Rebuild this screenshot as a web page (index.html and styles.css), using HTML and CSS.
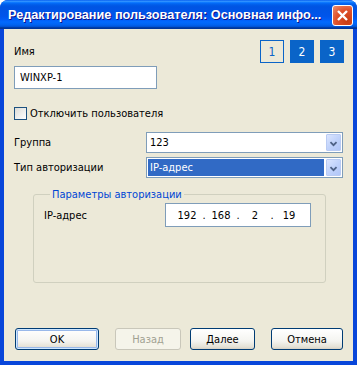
FILE: index.html
```html
<!DOCTYPE html>
<html lang="ru">
<head>
    <meta charset="UTF-8">
    <title>Редактирование пользователя</title>
    <link rel="stylesheet" href="styles.css">
</head>
<body>
    <div class="window">
        <div class="titlebar">
            <span class="title">Редактирование пользователя: Основная инфо...</span>
            <button class="close-btn" title="Закрыть">
                <svg width="19" height="19" viewBox="0 0 19 19">
                    <path d="M5 5 L14 14 M14 5 L5 14" stroke="#fff" stroke-width="2.4" fill="none"/>
                </svg>
            </button>
        </div>

        <div class="dialog-body">
            <div class="content">
                <div class="top-row">
                    <span class="field-label name-label">Имя</span>
                    <div class="pager">
                        <span class="page current">1</span>
                        <span class="page">2</span>
                        <span class="page">3</span>
                    </div>
                </div>

                <div class="textbox name-box">WINXP-1</div>

                <div class="check-row">
                    <span class="checkbox"></span>
                    <span>Отключить пользователя</span>
                </div>

                <div class="form-grid">
                    <span class="field-label">Группа</span>
                    <div class="combo">
                        <span class="combo-text">123</span>
                        <span class="combo-btn">
                            <svg width="15" height="17" viewBox="0 0 15 17"><path d="M4 7 L7.5 10.5 L11 7" stroke="#4d6185" stroke-width="2" fill="none"/></svg>
                        </span>
                    </div>

                    <span class="field-label">Тип авторизации</span>
                    <div class="combo">
                        <span class="combo-text selected">IP-адрес</span>
                        <span class="combo-btn">
                            <svg width="15" height="17" viewBox="0 0 15 17"><path d="M4 7 L7.5 10.5 L11 7" stroke="#4d6185" stroke-width="2" fill="none"/></svg>
                        </span>
                    </div>
                </div>

                <fieldset class="group-box">
                    <legend>Параметры авторизации</legend>
                    <div class="ip-row">
                        <span class="field-label">IP-адрес</span>
                        <div class="ip-box">
                            <span class="octet">192</span><span class="dot">.</span>
                            <span class="octet">168</span><span class="dot">.</span>
                            <span class="octet">2</span><span class="dot">.</span>
                            <span class="octet">19</span>
                        </div>
                    </div>
                </fieldset>
            </div>

            <div class="button-row">
                <button class="xp-btn ok-btn focused">OK</button>
                <button class="xp-btn back-btn" disabled>Назад</button>
                <button class="xp-btn next-btn">Далее</button>
                <button class="xp-btn cancel-btn">Отмена</button>
            </div>
        </div>
    </div>
</body>
</html>
```

FILE: styles.css
```css
/* XP style dialog */
body {
    margin: 0;
    padding: 0;
    font-family: 'DejaVu Sans Condensed', 'Liberation Sans', Tahoma, sans-serif;
    font-size: 11px;
    color: #000;
    background: #fff;
}

.window {
    width: 357px;
    height: 365px;
    box-sizing: border-box;
    padding: 0 4px 4px 4px;
    background: #0846da;
    border-radius: 8px 8px 0 0;
    display: flex;
    flex-direction: column;
}

/* Title bar */
.titlebar {
    height: 29px;
    margin: 0 -4px;
    padding: 0 4px 0 8px;
    display: flex;
    align-items: center;
    justify-content: space-between;
    border-radius: 8px 8px 0 0;
    background: linear-gradient(to bottom, #0058ee 0%, #3593ff 4%, #288eff 6%, #127dff 8%, #036ffc 10%, #0262ee 14%, #0057e5 20%, #0054e3 24%, #0055eb 56%, #005bf5 66%, #026afe 76%, #0062ef 86%, #0052d6 92%, #0040ab 94%, #003092 100%);
}

.title {
    font-family: 'Liberation Sans', Arial, sans-serif;
    font-weight: bold;
    font-size: 12.7px;
    color: #fff;
    text-shadow: 1px 1px #0f1089;
    white-space: nowrap;
    margin-top: 1px;
}

.close-btn {
    width: 21px;
    height: 21px;
    padding: 0;
    margin-top: 1px;
    border: 1px solid #fff;
    border-radius: 3px;
    background: radial-gradient(circle at 75% 80%, #c83c12 0%, #e0522c 55%, #ec8a6a 95%, #f4b69e 100%);
    display: flex;
    align-items: center;
    justify-content: center;
}

/* Dialog body */
.dialog-body {
    flex: 1;
    background: #ece9d8;
    display: flex;
    flex-direction: column;
}

.content {
    padding: 11px 9px 0 10px;
}

.top-row {
    display: flex;
    justify-content: space-between;
    align-items: flex-start;
    height: 23px;
}

.name-label {
    margin-top: 5px;
}

.pager {
    display: flex;
    gap: 6px;
}

.page {
    width: 24px;
    height: 23px;
    box-sizing: border-box;
    display: flex;
    align-items: center;
    justify-content: center;
    background: #0a64c8;
    color: #fff;
    font-size: 12px;
}

.page.current {
    background: transparent;
    border: 1px solid #0a64c8;
    color: #0a64c8;
}

.textbox {
    box-sizing: border-box;
    border: 1px solid #7f9db9;
    background: #fff;
    display: flex;
    align-items: center;
}

.name-box {
    width: 143px;
    height: 23px;
    margin-top: 3px;
    padding-left: 5px;
}

.check-row {
    display: flex;
    align-items: center;
    gap: 3px;
    margin-top: 18px;
    height: 13px;
}

.checkbox {
    width: 13px;
    height: 13px;
    box-sizing: border-box;
    border: 1px solid #1c5180;
    background: linear-gradient(135deg, #dcdcd7 0%, #ffffff 100%);
}

.form-grid {
    display: grid;
    grid-template-columns: 132px 197px;
    row-gap: 4px;
    align-items: center;
    margin-top: 12px;
}

.combo {
    height: 21px;
    box-sizing: border-box;
    border: 1px solid #7f9db9;
    background: #fff;
    display: flex;
    align-items: center;
    padding: 1px;
}

.combo-text {
    flex: 1;
    height: 100%;
    display: flex;
    align-items: center;
    padding-left: 2px;
}

.combo-text.selected {
    background: #316ac5;
    color: #fff;
    margin-right: 2px;
}

.combo-btn {
    width: 15px;
    height: 17px;
    box-sizing: border-box;
    border: 1px solid #b9cbf3;
    border-radius: 1px;
    background: linear-gradient(135deg, #dbe5fe 0%, #c1d3fb 50%, #b1c6f8 100%);
    display: flex;
}

/* Group box */
.group-box {
    margin: 10px 0 0 19px;
    width: 293px;
    height: 95px;
    box-sizing: border-box;
    padding: 2px 0 0 10px;
    border: 1px solid #d0d0bf;
    border-radius: 3px;
}

.group-box legend {
    color: #0046d5;
    padding: 0 2px;
    margin-left: 6px;
}

.ip-row {
    display: flex;
    align-items: center;
}

.ip-row .field-label {
    width: 121px;
}

.ip-box {
    width: 146px;
    height: 24px;
    box-sizing: border-box;
    border: 1px solid #7f9db9;
    background: #fff;
    display: flex;
    align-items: center;
    padding-left: 11px;
}

.octet {
    width: 20px;
    text-align: center;
}

.dot {
    width: 14px;
    text-align: center;
}

/* Buttons */
.button-row {
    margin-top: auto;
    padding: 0 0 11px 11px;
    display: flex;
}

.xp-btn {
    height: 22px;
    box-sizing: border-box;
    font-family: inherit;
    font-size: 11px;
    color: #000;
    border: 1px solid #003c74;
    border-radius: 3px;
    background: linear-gradient(to bottom, #ffffff 0%, #f4f4f0 60%, #e4e1d5 90%, #d6d0c5 100%);
    padding: 0;
}

.xp-btn.focused {
    box-shadow: inset 0 0 0 1px #cee7ff, inset 0 0 0 2px #98b8ea;
}

.xp-btn:disabled {
    border-color: #c9c7ba;
    background: #f5f4ea;
    color: #a1a192;
}

.ok-btn { width: 84px; }
.back-btn { width: 66px; margin-left: 16px; }
.next-btn { width: 65px; margin-left: 9px; }
.cancel-btn { width: 72px; margin-left: 16px; }
```
